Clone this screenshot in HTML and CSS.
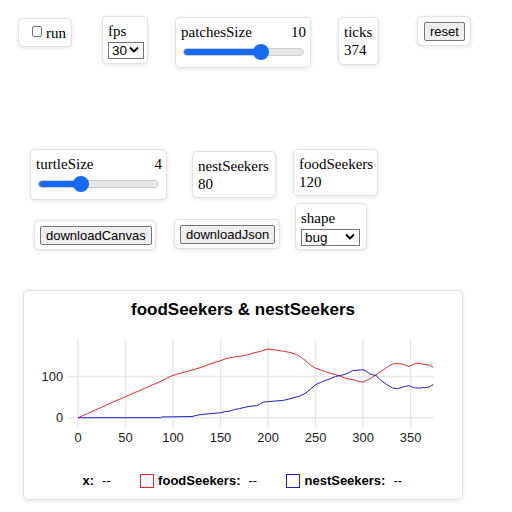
FILE: index.html
```html
<!DOCTYPE html>
<html>
<head>
<meta charset="utf-8">
<link rel="stylesheet" href="styles.css">
</head>
<body>
<div class="desktop">
  <div class="widget w-run">
    <label class="check-label"><input type="checkbox" class="check"><span>run</span></label>
  </div>

  <div class="widget w-fps">
    <div class="label">fps</div>
    <div class="select-wrap sel-fps">
      <select class="select"><option>30</option></select>
      <svg class="chev" width="10" height="7" viewBox="0 0 10 7"><path d="M1 1.5 L5 5.5 L9 1.5" fill="none" stroke="#000" stroke-width="1.8"/></svg>
    </div>
  </div>

  <div class="widget w-patches">
    <div class="row"><span>patchesSize</span><span>10</span></div>
    <input type="range" class="slider" min="2" max="14" value="10" style="--fill:64.5%">
  </div>

  <div class="widget w-ticks">
    <div class="label">ticks</div>
    <div class="label">374</div>
  </div>

  <div class="widget w-reset">
    <button class="btn">reset</button>
  </div>

  <div class="widget w-turtle">
    <div class="row"><span>turtleSize</span><span>4</span></div>
    <input type="range" class="slider" min="1" max="10" value="4" style="--fill:34.7%">
  </div>

  <div class="widget w-nest">
    <div class="label">nestSeekers</div>
    <div class="label">80</div>
  </div>

  <div class="widget w-food">
    <div class="label">foodSeekers</div>
    <div class="label">120</div>
  </div>

  <div class="widget w-dlcanvas">
    <button class="btn">downloadCanvas</button>
  </div>

  <div class="widget w-dljson">
    <button class="btn">downloadJson</button>
  </div>

  <div class="widget w-shape">
    <div class="label">shape</div>
    <div class="select-wrap sel-shape">
      <select class="select"><option>bug</option></select>
      <svg class="chev" width="10" height="7" viewBox="0 0 10 7"><path d="M1 1.5 L5 5.5 L9 1.5" fill="none" stroke="#000" stroke-width="1.8"/></svg>
    </div>
  </div>

  <div class="widget w-chart">
    <div class="chart-title">foodSeekers &amp; nestSeekers</div>
    <svg class="plot" width="438" height="132" viewBox="1 38 438 132">
      <g class="grid" stroke="#e8e8e8" stroke-width="1.5">
        <line x1="54" y1="50" x2="54" y2="138"/>
        <line x1="101.8" y1="50" x2="101.8" y2="138"/>
        <line x1="149.6" y1="50" x2="149.6" y2="138"/>
        <line x1="197.4" y1="50" x2="197.4" y2="138"/>
        <line x1="245.2" y1="50" x2="245.2" y2="138"/>
        <line x1="293" y1="50" x2="293" y2="138"/>
        <line x1="340.8" y1="50" x2="340.8" y2="138"/>
        <line x1="388.6" y1="50" x2="388.6" y2="138"/>
        <line x1="44" y1="128.3" x2="412" y2="128.3"/>
        <line x1="44" y1="86.7" x2="412" y2="86.7"/>
      </g>
      <g class="axis-text" font-family="Liberation Sans, Arial, sans-serif" font-size="13" fill="#222">
        <text x="39" y="91.5" text-anchor="end">100</text>
        <text x="39" y="133" text-anchor="end">0</text>
        <text x="54" y="153" text-anchor="middle">0</text>
        <text x="101.8" y="153" text-anchor="middle">50</text>
        <text x="149.6" y="153" text-anchor="middle">100</text>
        <text x="197.4" y="153" text-anchor="middle">150</text>
        <text x="245.2" y="153" text-anchor="middle">200</text>
        <text x="293" y="153" text-anchor="middle">250</text>
        <text x="340.8" y="153" text-anchor="middle">300</text>
        <text x="388.6" y="153" text-anchor="middle">350</text>
      </g>
      <polyline fill="none" stroke="#e4262b" stroke-width="1" points="54,128.3 63.6,124.1 73.1,119.8 82.7,115.4 92.2,111.2 101.8,107.1 111.4,102.9 120.9,98.8 130.5,94.6 140,90.4 146.7,86.7 154.4,84.2 163.9,81.7 169.7,80 178.3,77.5 186.9,74.2 197.4,70.9 204.1,68.4 211.7,67.1 220.3,65.9 226.1,64.6 230.9,63 236.6,61.7 245.2,59.2 250,59.7 254.8,60.5 260.5,61.3 267.2,62.6 273.9,64.6 278.7,67.6 283.4,71.3 288.2,75.5 293,78.4 297.8,80.1 302.6,81.7 307.3,83.4 313.1,85 317.9,86.3 323.6,88.8 331.2,90 336,91.7 340.8,92.5 345.6,90 350.4,87.5 355.1,84.2 359.9,80.9 364.7,77.5 370.4,74.2 375.2,73.8 380,74.2 383.8,75.5 386.7,76.7 390.5,75.1 393.4,73.4 398.2,73.8 402.9,74.6 407.7,75.5 411.5,77.5"/>
      <polyline fill="none" stroke="#1c1cc8" stroke-width="1" points="54,128.3 137.2,128.3 138.1,127.5 168.7,127.1 173.5,125.8 178.3,125 187.8,124.1 197.4,123.3 202.2,122.1 207,121.6 211.7,120 216.5,119.1 221.3,117.9 227,116.7 233.7,116.2 237.6,114.2 240.4,112.5 250,111.7 260.5,110.8 267.2,109.2 276.7,106.7 283.4,103.3 288.2,99.2 293,95 297.8,92.9 302.6,90.9 307.3,89.2 313.1,86.7 317.9,85.9 323.6,84.2 327.4,82.5 330.3,80.9 340.8,80 344.6,81.7 347.5,84.2 350.4,85 354.2,85.9 357.1,89.2 359.9,91.7 364.7,95 370.4,98.3 375.2,99.2 380,97.5 383.8,96.7 386.7,95.9 390.5,97.5 393.4,98.3 398.2,98.3 402.9,97.9 406.8,97.5 409.6,95.9 411.5,95"/>
    </svg>
    <div class="legend">
      <div class="leg-item"><span class="leg-label">x:</span><span class="leg-val">--</span></div>
      <div class="leg-item"><span class="marker m-red"></span><span class="leg-label">foodSeekers:</span><span class="leg-val">--</span></div>
      <div class="leg-item"><span class="marker m-blue"></span><span class="leg-label">nestSeekers:</span><span class="leg-val">--</span></div>
    </div>
  </div>
</div>
</body>
</html>
```
FILE: styles.css
```css
html, body {
  margin: 0;
  padding: 0;
  background: #fff;
}

.desktop {
  position: relative;
  width: 512px;
  height: 512px;
  font-family: "Liberation Serif", "Times New Roman", serif;
  font-size: 15px;
  color: #000;
}

.widget {
  position: absolute;
  box-sizing: border-box;
  background: #fff;
  border: 1px solid #e2e2e2;
  border-radius: 5px;
  box-shadow: 0 1px 4px rgba(0, 0, 0, 0.10);
  padding: 5px;
  display: flex;
  flex-direction: column;
  line-height: 18px;
}

.label {
  line-height: 18px;
  white-space: nowrap;
}

.row {
  display: flex;
  justify-content: space-between;
  line-height: 18px;
  padding-right: 0;
}

/* widget positions on the free canvas */
.w-run { left: 18px; top: 18px; width: 54px; height: 29px; padding: 0 5px 0 13px; justify-content: center; }
.w-fps { left: 102px; top: 16px; width: 46px; height: 48px; }
.w-patches { left: 175px; top: 17px; width: 136px; height: 51px; padding-right: 4px; }
.w-ticks { left: 338px; top: 17px; width: 41px; height: 48px; }
.w-reset { left: 417px; top: 16px; width: 54px; height: 30px; padding: 5px 6px; }
.w-turtle { left: 30px; top: 149px; width: 137px; height: 51px; padding-right: 4px; }
.w-nest { left: 192px; top: 151px; width: 84px; height: 47px; }
.w-food { left: 293px; top: 149px; width: 85px; height: 47px; }
.w-dlcanvas { left: 34px; top: 220px; width: 122px; height: 30px; }
.w-dljson { left: 174px; top: 219px; width: 106px; height: 30px; }
.w-shape { left: 295px; top: 203px; width: 72px; height: 47px; }
.w-chart { left: 23px; top: 290px; width: 440px; height: 210px; padding: 0; }

.check-label {
  display: flex;
  align-items: center;
  gap: 4px;
}

.check {
  appearance: none;
  -webkit-appearance: none;
  margin: 0;
  width: 11px;
  height: 11px;
  border: 1px solid #767676;
  border-radius: 2px;
  background: #fff;
  box-sizing: border-box;
  position: relative;
  top: -1px;
}

.select-wrap {
  position: relative;
  margin-top: 1px;
  height: 17px;
}

.sel-fps { width: 36px; }
.sel-shape { width: 59px; }

.select {
  appearance: none;
  -webkit-appearance: none;
  box-sizing: border-box;
  width: 100%;
  height: 17px;
  margin: 0;
  border: 1px solid #767676;
  border-radius: 0;
  background: #fff;
  font-family: "Liberation Sans", Arial, sans-serif;
  font-size: 13.5px;
  line-height: 15px;
  padding: 0 0 0 3px;
  color: #000;
}

.chev {
  position: absolute;
  right: 5px;
  top: 5px;
  pointer-events: none;
}

.slider {
  appearance: none;
  -webkit-appearance: none;
  width: 121px;
  height: 16px;
  margin: 3px 2px 2px 2px;
  background: transparent;
  padding: 0;
}

.slider::-webkit-slider-runnable-track {
  height: 8px;
  border-radius: 4px;
  box-sizing: border-box;
  border: 1px solid #cdcdcd;
  background: linear-gradient(to right, #1769f3 0, #1769f3 var(--fill), #e7e7e7 var(--fill), #e7e7e7 100%);
}

.slider::-webkit-slider-thumb {
  -webkit-appearance: none;
  appearance: none;
  width: 16px;
  height: 16px;
  border-radius: 50%;
  background: #1769f3;
  border: none;
  margin-top: -5px;
}

.btn {
  font-family: "Liberation Sans", Arial, sans-serif;
  font-size: 13px;
  line-height: 15px;
  padding: 1px 5px;
  margin: 0;
  border: 1px solid #767676;
  border-radius: 2px;
  background: #efefef;
  color: #000;
  align-self: flex-start;
}

.chart-title {
  height: 37px;
  line-height: 38px;
  text-align: center;
  font-family: "Liberation Sans", Arial, sans-serif;
  font-weight: bold;
  font-size: 17px;
}

.plot {
  display: block;
}

.legend {
  height: 40px;
  display: flex;
  justify-content: center;
  align-items: center;
  gap: 26px;
  font-family: "Liberation Sans", Arial, sans-serif;
  font-size: 13px;
  line-height: 16px;
  padding-left: 2px;
  padding-top: 3px;
  box-sizing: border-box;
}

.leg-item {
  display: flex;
  align-items: center;
}

.leg-label {
  font-weight: bold;
}

.leg-val {
  margin-left: 8px;
  min-width: 12px;
}

.marker {
  width: 14px;
  height: 14px;
  box-sizing: border-box;
  border: 1.5px solid;
  margin-right: 4px;
}

.m-red { border-color: #e4262b; }
.m-blue { border-color: #1c1cc8; }
```
